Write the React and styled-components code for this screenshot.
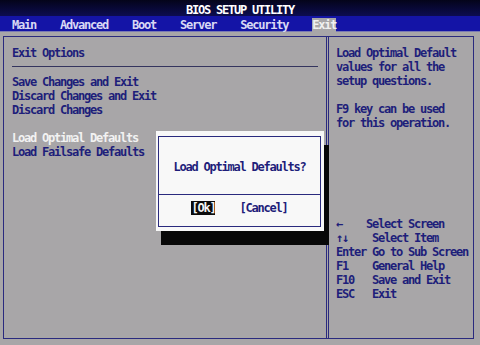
import React from "react";
import styled, { createGlobalStyle } from "styled-components";

const GlobalStyle = createGlobalStyle`
  html, body {
    margin: 0;
    padding: 0;
    background: #a8a6a8;
  }
  body {
    font-family: "DejaVu Sans Mono", "Liberation Mono", monospace;
    font-size: 12px;
    letter-spacing: -1.22px;
    line-height: 14px;
    font-weight: bold;
  }
`;

const menu = ["Main", "Advanced", "Boot", "Server", "Security", "Exit"];

const help = [
  { key: "←", desc: "Select Screen", narrow: true },
  { key: "↑↓", desc: "Select Item" },
  { key: "Enter", desc: "Go to Sub Screen" },
  { key: "F1", desc: "General Help" },
  { key: "F10", desc: "Save and Exit" },
  { key: "ESC", desc: "Exit" },
];

const App = () => {
  return (
    <Screen>
      <GlobalStyle />
      <TitleBar>BIOS SETUP UTILITY</TitleBar>
      <MenuBar>
        {menu.map((m) => (
          <MenuItem key={m} $active={m === "Exit"}>
            {m}
          </MenuItem>
        ))}
      </MenuBar>
      <Body>
        <Frame>
          <LeftPanel>
            <Line>Exit Options</Line>
            <Separator />
            <Line>Save Changes and Exit</Line>
            <Line>Discard Changes and Exit</Line>
            <Line>Discard Changes</Line>
            <Blank />
            <Line $light>Load Optimal Defaults</Line>
            <Line>Load Failsafe Defaults</Line>
          </LeftPanel>
          <RightPanel>
            <Line>Load Optimal Default</Line>
            <Line>values for all the</Line>
            <Line>setup questions.</Line>
            <Blank />
            <Line>F9 key can be used</Line>
            <Line>for this operation.</Line>
            <HelpList>
              {help.map((h) => (
                <HelpRow key={h.key}>
                  <HelpKey $narrow={h.narrow}>{h.key}</HelpKey>
                  <span>{h.desc}</span>
                </HelpRow>
              ))}
            </HelpList>
          </RightPanel>
        </Frame>
      </Body>
      <Dialog>
        <DialogInner>
          <Question>Load Optimal Defaults?</Question>
          <Buttons>
            <DlgButton $selected>[Ok]</DlgButton>
            <DlgButton>[Cancel]</DlgButton>
          </Buttons>
        </DialogInner>
      </Dialog>
    </Screen>
  );
};

const Screen = styled.div`
  position: relative;
  width: 480px;
  height: 345px;
  display: flex;
  flex-direction: column;
  overflow: hidden;
  color: #1e1e7a;
`;

const TitleBar = styled.div`
  height: 16px;
  display: flex;
  align-items: center;
  justify-content: center;
  padding-top: 3px;
  box-sizing: border-box;
  color: #ffffff;
  background: linear-gradient(#04041a, #0c0c50);
`;

const MenuBar = styled.div`
  height: 16px;
  box-sizing: border-box;
  display: flex;
  align-items: center;
  gap: 24px;
  padding: 2px 0 0 12px;
  background: #1414a6;
  border-bottom: 1px solid #7a7ab4;
`;

const MenuItem = styled.span`
  color: ${(p) => (p.$active ? "#f0f0f0" : "#d8d8f4")};
  background: ${(p) => (p.$active ? "#a8a6a8" : "transparent")};
  line-height: 14px;
`;

const Body = styled.div`
  flex: 1;
  padding: 4px 6px 6px 3px;
  min-height: 0;
`;

const Frame = styled.div`
  height: 100%;
  box-sizing: border-box;
  border: 1px solid #2a2a7e;
  display: flex;
  gap: 1px;
`;

const LeftPanel = styled.div`
  width: 323px;
  box-sizing: border-box;
  padding: 9px 8px 0 8px;
  border-right: 1px solid #2a2a7e;
`;

const RightPanel = styled.div`
  flex: 1;
  padding: 9px 0 0 7px;
  border-left: 1px solid #2a2a7e;
`;

const Line = styled.div`
  height: 14px;
  white-space: pre;
  color: ${(p) => (p.$light ? "#f2f2f2" : "inherit")};
`;

const Blank = styled.div`
  height: 14px;
`;

const Separator = styled.div`
  height: 1px;
  background: #34345e;
  margin: 6px 0 8px;
`;

const HelpList = styled.div`
  margin-top: 87px;
`;

const HelpRow = styled.div`
  display: flex;
  height: 14px;
  white-space: pre;
`;

const HelpKey = styled.span`
  width: ${(p) => (p.$narrow ? "30px" : "36px")};
`;

const Dialog = styled.div`
  position: absolute;
  left: 156px;
  top: 131px;
  width: 168px;
  height: 100px;
  box-sizing: border-box;
  padding: 5px 3px 4px 2px;
  background: #f8f8f8;
  box-shadow: 5px 14px 0 #080808;
  display: flex;
`;

const DialogInner = styled.div`
  flex: 1;
  border: 1px solid #2a2a7e;
  display: flex;
  flex-direction: column;
`;

const Question = styled.div`
  height: 58px;
  display: flex;
  align-items: center;
  justify-content: center;
  padding-top: 2px;
  box-sizing: border-box;
  border-bottom: 1px solid #2a2a7e;
`;

const Buttons = styled.div`
  flex: 1;
  display: flex;
  justify-content: center;
  align-items: flex-start;
  padding-top: 6px;
  gap: 24px;
`;

const DlgButton = styled.span`
  line-height: 14px;
  color: ${(p) => (p.$selected ? "#f4f4f4" : "inherit")};
  background: ${(p) => (p.$selected ? "#0c0c0c" : "transparent")};
`;

export default App;
